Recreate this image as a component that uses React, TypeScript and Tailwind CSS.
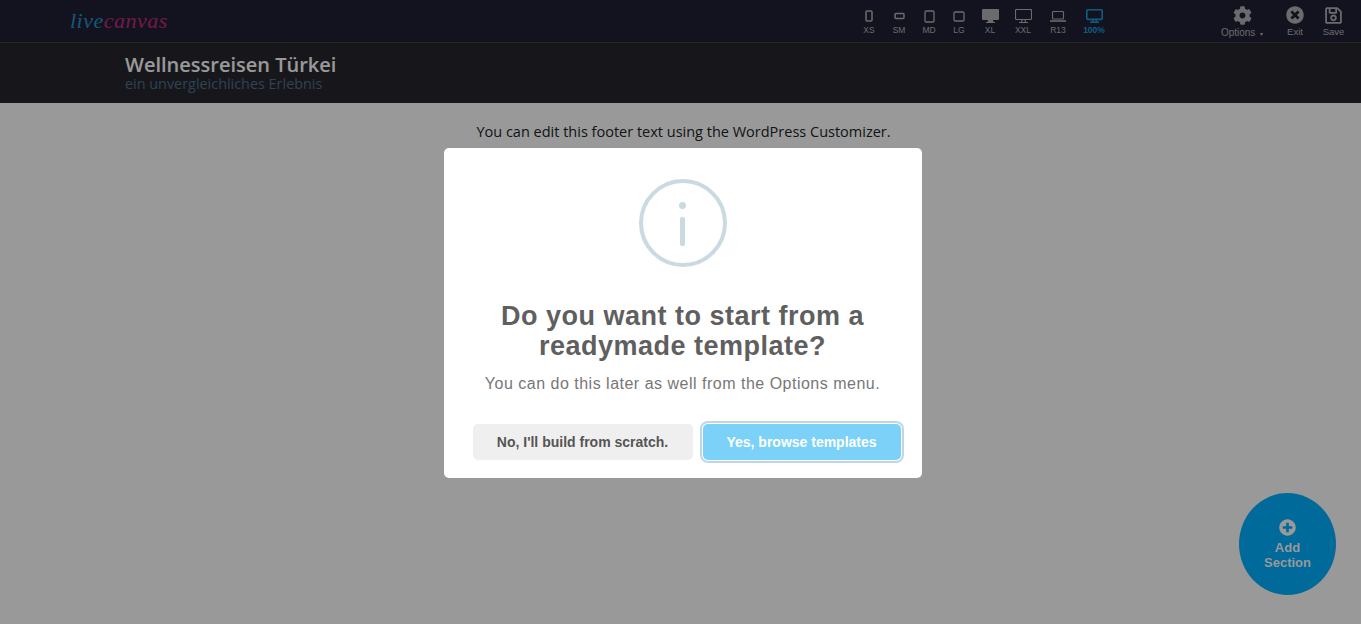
import { FaCog, FaTimesCircle, FaRegSave, FaPlusCircle } from 'react-icons/fa';

// device preview buttons in the top bar
const DEVICES = [
  { label: 'XS', width: 'w-[30px]', icon: <svg width="8" height="12" viewBox="0 0 8 12" fill="none" stroke="currentColor" strokeWidth="1.5"><rect x="1" y="1" width="6" height="10" rx="1" /></svg> },
  { label: 'SM', width: 'w-[30px]', icon: <svg width="11" height="8" viewBox="0 0 11 8" fill="none" stroke="currentColor" strokeWidth="1.5"><rect x="1" y="1.5" width="9" height="5" rx="1" /></svg> },
  { label: 'MD', width: 'w-[30px]', icon: <svg width="11" height="13" viewBox="0 0 11 13" fill="none" stroke="currentColor" strokeWidth="1.3"><rect x="1" y="1" width="9" height="11" rx="1.2" /></svg> },
  { label: 'LG', width: 'w-[30px]', icon: <svg width="12" height="11" viewBox="0 0 12 11" fill="none" stroke="currentColor" strokeWidth="1.3"><rect x="1" y="1" width="10" height="9" rx="1.2" /></svg> },
  { label: 'XL', width: 'w-[32px]', icon: <svg width="17" height="14" viewBox="0 0 17 14" fill="currentColor"><path d="M1 0h15a1 1 0 0 1 1 1v9a1 1 0 0 1-1 1h-5l.5 2H13v1H4v-1h1.500l.5-2H1a1 1 0 0 1-1-1V1a1 1 0 0 1 1-1z" /></svg> },
  { label: 'XXL', width: 'w-[34px]', icon: <svg width="17" height="14" viewBox="0 0 17 14" fill="none" stroke="currentColor" strokeWidth="1.1"><rect x=".5" y=".5" width="16" height="10" rx="1" /><path d="M7 11l-.5 2M10 11l.5 2M4 13.500h9" /></svg> },
  { label: 'R13', width: 'w-[36px]', icon: <svg width="16" height="11" viewBox="0 0 16 11" fill="none" stroke="currentColor" strokeWidth="1.1"><rect x="2.500" y=".5" width="11" height="7.500" rx="1" /><path d="M0 10h16" strokeWidth="1.600" /></svg> },
  { label: '100%', width: 'w-[36px]', active: true, icon: <svg width="17" height="14" viewBox="0 0 17 14" fill="none" stroke="currentColor" strokeWidth="1.600"><rect x=".8" y=".8" width="15.400" height="9.600" rx="1" /><path d="M7 11l-.5 2M10 11l.5 2M4 13.300h9" /></svg> },
];

export default function App() {
  return (
    <div className="relative h-[624px] overflow-hidden bg-white font-['Open_Sans',sans-serif]">
      <div className="flex h-[43px] items-center border-b border-[#3f3f44] bg-[#212134] font-['Liberation_Sans',sans-serif] text-[#b2b2b8]">
        <div className="ml-[70px] font-['Liberation_Serif',serif] text-[22px] italic leading-none tracking-[0.5px]">
          <span className="text-[#2a8fc4]">live</span>
          <span className="text-[#c2297c]">canvas</span>
        </div>

        <div className="ml-auto flex h-full">
          {DEVICES.map(d => (
            <div key={d.label} className={`flex flex-col items-center justify-end pb-[7px] ${d.width} ${d.active ? 'font-bold text-[#1c9ad6]' : ''}`}>
              <div className="flex h-[16px] items-center">{d.icon}</div>
              <span className="mt-[1px] text-[8.5px] leading-[10px]">{d.label}</span>
            </div>
          ))}
        </div>

        <div className="ml-[102px] mr-[8px] flex h-full">
          <div className="flex w-[56px] flex-col items-center justify-end pb-[2px]">
            <FaCog size={19} />
            <span className="mt-[2px] text-[10px] leading-[11px]">Options <span className="ml-[2px] text-[6px]">▾</span></span>
          </div>
          <div className="ml-[6px] flex w-[38px] flex-col items-center justify-end pb-[5px]">
            <FaTimesCircle size={18} />
            <span className="mt-[2px] text-[9.5px] leading-[11px]">Exit</span>
          </div>
          <div className="flex w-[39px] flex-col items-center justify-end pb-[5px]">
            <FaRegSave size={19} />
            <span className="mt-[1px] text-[9.5px] leading-[11px]">Save</span>
          </div>
        </div>
      </div>

      <div className="flex h-[60px] flex-col justify-center bg-[#27272d] pl-[125px]">
        <div className="text-[20px] font-semibold leading-[22px] text-white">Wellnessreisen Türkei</div>
        <div className="text-[14.4px] leading-[16px] text-[#4d7090]">ein unvergleichliches Erlebnis</div>
      </div>

      <p className="mt-[18px] pl-[6px] text-center text-[14.5px] leading-[21px] text-[#212529]">
        You can edit this footer text using the WordPress Customizer.
      </p>

      {/* dimmed overlay + dialog */}
      <div className="absolute inset-0 flex items-center justify-center bg-black/40 pl-[4px] pt-[2px]">
        <div className="flex h-[330px] w-[478px] flex-col items-center rounded-[5px] bg-white font-['Liberation_Sans',sans-serif]">
          <div className="mt-[31px] flex h-[88px] w-[88px] flex-col items-center rounded-full border-[4px] border-[#c9dae1]">
            <div className="mt-[19px] h-[7px] w-[7px] rounded-full bg-[#c9dae1]" />
            <div className="mt-[8px] h-[29px] w-[5px] rounded-[2px] bg-[#c9dae1]" />
          </div>
          <h2 className="mt-[34px] w-[420px] text-center text-[27px] font-bold leading-[30px] tracking-[0.5px] text-[#5f5f5f]">
            Do you want to start from a readymade template?
          </h2>
          <p className="mt-[11px] text-center text-[16px] leading-[24px] tracking-[0.5px] text-[#777]">
            You can do this later as well from the Options menu.
          </p>
          <div className="mt-[28px] flex w-full gap-[10px] pl-[29px]">
            <button className="h-[36px] w-[220px] rounded-[5px] bg-[#efefef] text-[14px] font-bold text-[#555]">No, I'll build from scratch.</button>
            <button className="h-[36px] w-[198px] rounded-[5px] bg-[#7cd1f9] text-[14px] font-bold text-white shadow-[0_0_0_1px_#fff,0_0_0_3px_rgba(43,114,165,0.29)]">Yes, browse templates</button>
          </div>
        </div>
      </div>

      {/* add section button sits over the overlay */}
      <div className="absolute left-[1239px] top-[493px] flex h-[102px] w-[97px] flex-col items-center justify-center rounded-[50%] bg-[#006a9a] font-['Liberation_Sans',sans-serif] text-[13px] font-bold leading-[15px] text-[#999]">
        <FaPlusCircle size={17} className="mb-[4px]" />
        <span>Add</span>
        <span>Section</span>
      </div>
    </div>
  );
}
